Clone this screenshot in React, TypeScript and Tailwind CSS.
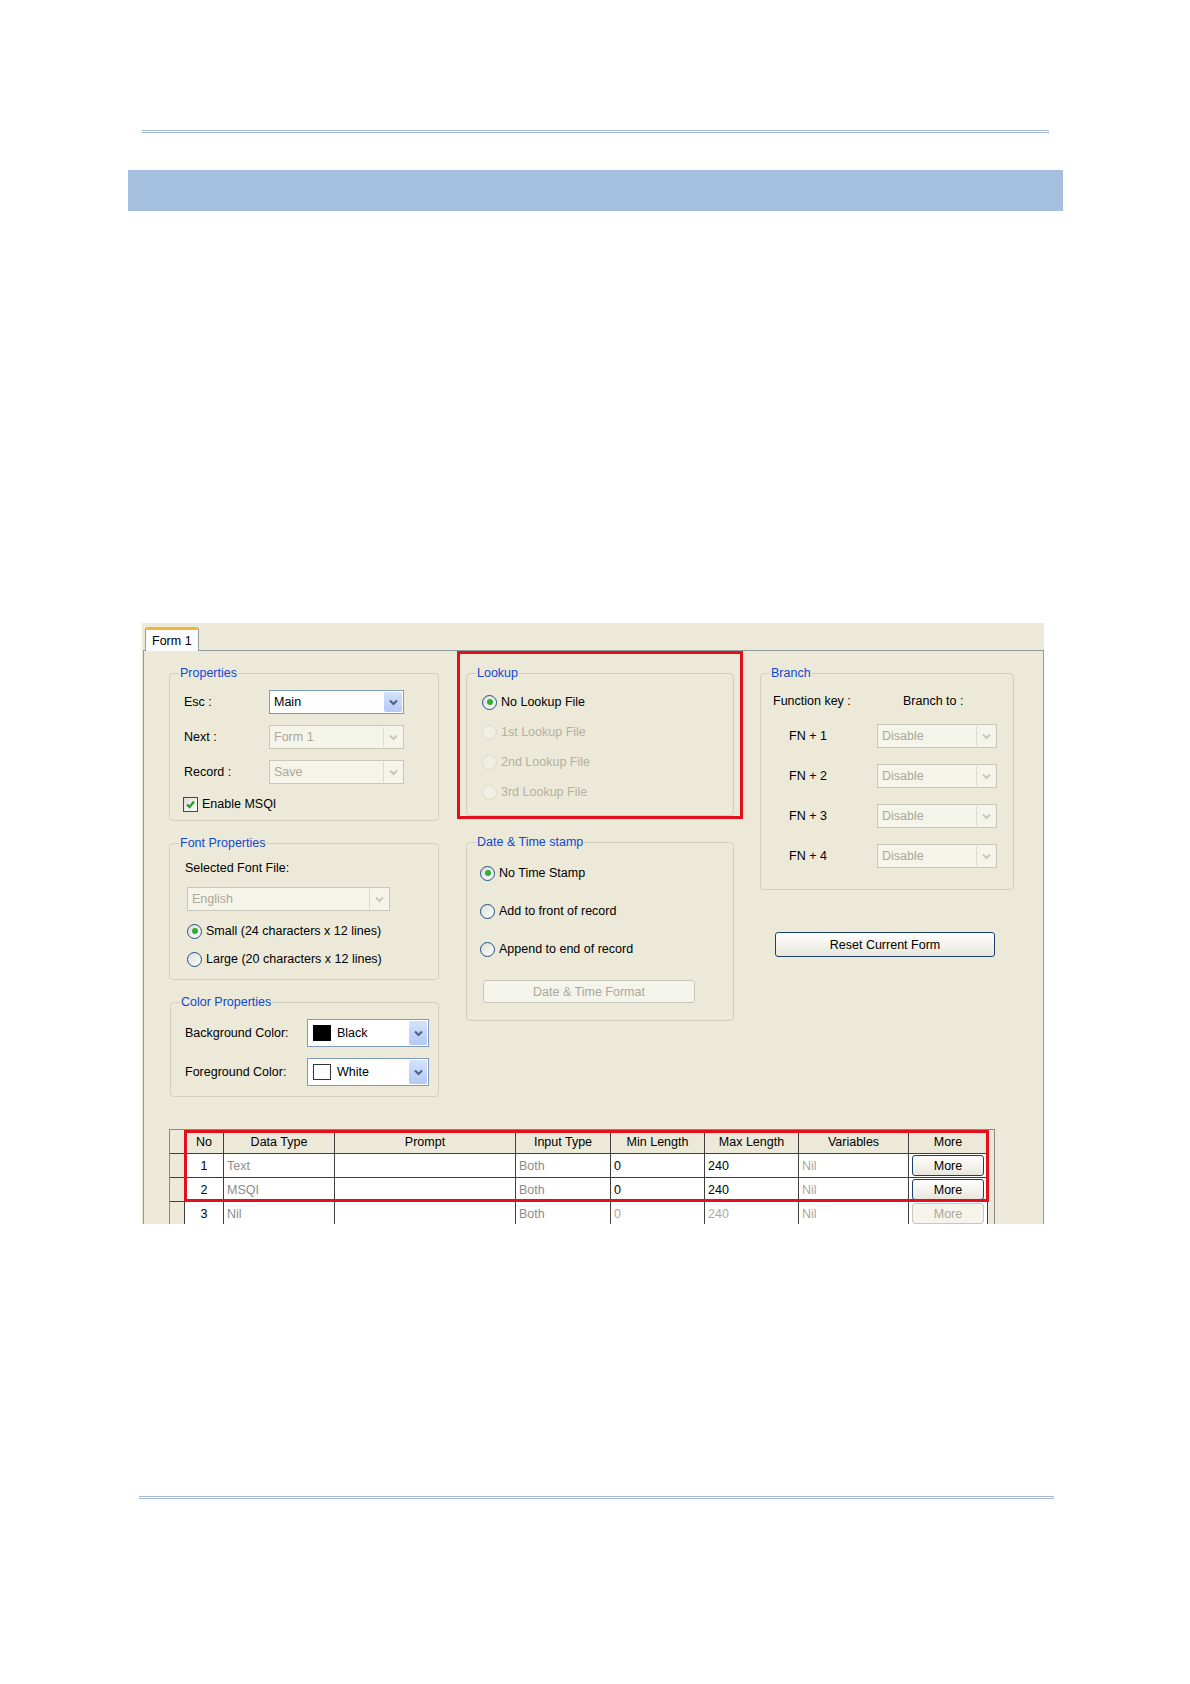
import type { ReactNode } from "react";

const FONT = { fontFamily: '"Liberation Sans", Arial, sans-serif' };

function GroupBox({
  title,
  className,
  children,
}: {
  title: string;
  className?: string;
  children?: ReactNode;
}) {
  return (
    <div className={"relative rounded-[4px] border border-[#d0d0bf] " + (className ?? "")}>
      <span className="absolute -top-[9px] left-[9px] bg-[#ece9d8] px-px text-[12.5px] leading-[16px] text-[#1048d0]">
        {title}
      </span>
      {children}
    </div>
  );
}

function Chevron({ color }: { color: string }) {
  return (
    <svg width="9" height="7" viewBox="0 0 9 7">
      <path d="M1 1.5 L4.5 5 L8 1.5" fill="none" stroke={color} strokeWidth="2" />
    </svg>
  );
}

function Combo({
  value,
  disabled,
  className,
  swatch,
}: {
  value: string;
  disabled?: boolean;
  className: string;
  swatch?: "black" | "white";
}) {
  return (
    <div
      className={
        "flex items-stretch border " +
        (disabled ? "border-[#c9c7ba] bg-[#f5f4ea] text-[#aca899]" : "border-[#7f9db9] bg-white text-black") +
        " " +
        className
      }
    >
      <div className="flex flex-1 items-center gap-[6px] pl-[4px]">
        {swatch === "black" && <span className="ml-px h-[16px] w-[18px] bg-black" />}
        {swatch === "white" && <span className="ml-px h-[16px] w-[18px] border border-[#333] bg-white" />}
        <span>{value}</span>
      </div>
      {disabled ? (
        <div className="m-px flex w-[19px] items-center justify-center border-l border-[#dcdad0]">
          <Chevron color="#c9c7ba" />
        </div>
      ) : (
        <div className="m-px flex w-[18px] items-center justify-center rounded-[2px] bg-linear-to-b from-[#d4e2fd] to-[#b3c9f5]">
          <Chevron color="#4d6185" />
        </div>
      )}
    </div>
  );
}

function Radio({ label, checked, disabled }: { label: string; checked?: boolean; disabled?: boolean }) {
  return (
    <div className={"flex h-[16px] items-center gap-[4px] " + (disabled ? "text-[#b4b1a3]" : "text-black")}>
      <span
        className={
          "flex h-[15px] w-[15px] items-center justify-center rounded-full border " +
          (disabled ? "border-[#dcdacf] bg-[#f1efe4]" : "border-[#1c5180] bg-linear-to-br from-[#dcdcd7] to-white")
        }
      >
        {checked && <span className="h-[6px] w-[6px] rounded-full bg-[#2fae2f]" />}
      </span>
      <span>{label}</span>
    </div>
  );
}

function XpButton({
  label,
  disabled,
  className,
}: {
  label: string;
  disabled?: boolean;
  className: string;
}) {
  return (
    <div
      className={
        "flex items-center justify-center rounded-[3px] border " +
        (disabled
          ? "border-[#c9c7ba] bg-[#f5f4ea] text-[#aca899]"
          : "border-[#1c3f6e] bg-linear-to-b from-white to-[#e8e6dc] text-black") +
        " " +
        className
      }
    >
      {label}
    </div>
  );
}

const COLS = "grid grid-cols-[15px_39px_111px_181px_95px_94px_94px_110px_79px]";
const HEAD = ["No", "Data Type", "Prompt", "Input Type", "Min Length", "Max Length", "Variables", "More"];

const ROWS = [
  { no: "1", type: "Text", active: true },
  { no: "2", type: "MSQI", active: true },
  { no: "3", type: "Nil", active: false },
];

function FieldGrid() {
  const cell = "border-r border-b border-[#3f3f3f] flex items-center";
  return (
    <div className="h-[96px] w-[826px] border-l border-t border-r border-[#8a8a80]">
      <div className={COLS + " h-[24px]"}>
        <div className={cell + " bg-[#ece9d8]"} />
        {HEAD.map((h) => (
          <div key={h} className={cell + " justify-center bg-[#ece9d8]"}>
            {h}
          </div>
        ))}
      </div>
      {ROWS.map((r) => {
        const dim = r.active ? "text-black" : "text-[#aca899]";
        return (
          <div key={r.no} className={COLS + " h-[24px]"}>
            <div className={cell + " bg-[#ece9d8]"} />
            <div className={cell + " justify-center bg-white text-black"}>{r.no}</div>
            <div className={cell + " bg-white pl-[3px] text-[#8c8c8c]"}>{r.type}</div>
            <div className={cell + " bg-white"} />
            <div className={cell + " bg-white pl-[3px] text-[#8c8c8c]"}>Both</div>
            <div className={cell + " bg-white pl-[3px] " + dim}>0</div>
            <div className={cell + " bg-white pl-[3px] " + dim}>240</div>
            <div className={cell + " bg-white pl-[3px] text-[#aca899]"}>Nil</div>
            <div className={cell + " justify-center bg-white"}>
              <XpButton label="More" disabled={!r.active} className="h-[21px] w-[72px]" />
            </div>
          </div>
        );
      })}
    </div>
  );
}

function Screenshot() {
  return (
    <div className="relative h-[601px] w-[902px] overflow-hidden bg-[#ece9d8] text-[12.5px] leading-[16px] text-black" style={FONT}>
      {/* tab strip */}
      <div className="flex h-[27px] items-end pl-[3px]">
        <div className="relative z-10 -mb-px flex h-[24px] w-[54px] items-center rounded-t-[3px] border-x border-t-[3px] border-x-[#919b9c] border-t-[#f3b33d] bg-[#fcfcfe] pl-[6px]">
          Form 1
        </div>
      </div>

      {/* tab page */}
      <div className="ml-px h-[700px] w-[901px] border-x border-t border-[#919b9c] pl-[25px] pt-[22px]">
        <div className="flex items-start">
          {/* left column */}
          <div className="w-[270px]">
            <GroupBox title="Properties" className="h-[148px] pl-[14px] pt-[16px]">
              <div className="flex flex-col gap-[11px]">
                <div className="flex h-[24px] items-center">
                  <span className="w-[85px]">Esc :</span>
                  <Combo value="Main" className="h-[24px] w-[135px]" />
                </div>
                <div className="flex h-[24px] items-center">
                  <span className="w-[85px]">Next :</span>
                  <Combo value="Form 1" disabled className="h-[24px] w-[135px]" />
                </div>
                <div className="flex h-[24px] items-center">
                  <span className="w-[85px]">Record :</span>
                  <Combo value="Save" disabled className="h-[24px] w-[135px]" />
                </div>
              </div>
              <div className="mt-[12px] -ml-px flex h-[16px] items-center gap-[4px]">
                <span className="flex h-[15px] w-[15px] items-center justify-center border border-[#1c5180] bg-linear-to-br from-[#dcdcd7] to-white">
                  <svg width="11" height="11" viewBox="0 0 11 11">
                    <path d="M2 5.5 L4.5 8 L9 2.5" fill="none" stroke="#21a121" strokeWidth="2.2" />
                  </svg>
                </span>
                <span>Enable MSQI</span>
              </div>
            </GroupBox>

            <GroupBox title="Font Properties" className="mt-[22px] h-[137px] pl-[15px] pt-[16px]">
              <div className="h-[16px]">Selected Font File:</div>
              <Combo value="English" disabled className="ml-[2px] mt-[11px] h-[24px] w-[203px]" />
              <div className="ml-[2px] mt-[12px] flex flex-col gap-[12px]">
                <Radio label="Small (24 characters x 12 lines)" checked />
                <Radio label="Large (20 characters x 12 lines)" />
              </div>
            </GroupBox>

            <GroupBox title="Color Properties" className="ml-px mt-[22px] h-[95px] pl-[14px] pt-[16px]">
              <div className="flex flex-col gap-[11px]">
                <div className="flex h-[28px] items-center">
                  <span className="w-[122px]">Background Color:</span>
                  <Combo value="Black" swatch="black" className="h-[28px] w-[122px]" />
                </div>
                <div className="flex h-[28px] items-center">
                  <span className="w-[122px]">Foreground Color:</span>
                  <Combo value="White" swatch="white" className="h-[28px] w-[122px]" />
                </div>
              </div>
            </GroupBox>
          </div>

          {/* middle column */}
          <div className="ml-[27px] w-[268px]">
            <GroupBox title="Lookup" className="h-[143px] pl-[15px] pt-[20px]">
              <div className="flex flex-col gap-[14px]">
                <Radio label="No Lookup File" checked />
                <Radio label="1st Lookup File" disabled />
                <Radio label="2nd Lookup File" disabled />
                <Radio label="3rd Lookup File" disabled />
              </div>
            </GroupBox>

            <GroupBox title="Date & Time stamp" className="mt-[26px] h-[179px] pl-[13px] pt-[22px]">
              <div className="flex flex-col gap-[22px]">
                <Radio label="No Time Stamp" checked />
                <Radio label="Add to front of record" />
                <Radio label="Append to end of record" />
              </div>
              <XpButton label="Date & Time Format" disabled className="ml-[3px] mt-[23px] h-[23px] w-[212px]" />
            </GroupBox>
          </div>

          {/* right column */}
          <div className="ml-[26px] w-[254px]">
            <GroupBox title="Branch" className="h-[217px] pt-[19px]">
              <div className="flex h-[16px] items-center">
                <span className="ml-[12px] w-[130px]">Function key :</span>
                <span>Branch to :</span>
              </div>
              <div className="mt-[15px] flex flex-col gap-[16px]">
                {["FN + 1", "FN + 2", "FN + 3", "FN + 4"].map((k) => (
                  <div key={k} className="flex h-[24px] items-center">
                    <span className="ml-[28px] w-[88px]">{k}</span>
                    <Combo value="Disable" disabled className="h-[24px] w-[120px]" />
                  </div>
                ))}
              </div>
            </GroupBox>
            <XpButton label="Reset Current Form" className="ml-[15px] mt-[42px] h-[25px] w-[220px]" />
          </div>
        </div>

        <div className="mt-[32px]">
          <FieldGrid />
        </div>
      </div>

      {/* red highlight frames drawn over the dialog */}
      <div className="absolute left-[315px] top-[28px] h-[168px] w-[286px] border-[3px] border-[#e3101b]" />
      <div className="absolute left-[42px] top-[507px] h-[72px] w-[805px] border-[3px] border-[#e3101b]" />
    </div>
  );
}

export default function App() {
  return (
    <div className="flex min-h-[1684px] w-[1190px] flex-col bg-white" style={FONT}>
      <div className="ml-[142px] mt-[130px] h-[3px] w-[907px] border-y border-[#a3b8d3]" />
      <div className="ml-[128px] mt-[37px] h-[41px] w-[935px] bg-[#a5bfdf]" />
      <div className="ml-[142px] mt-[412px]">
        <Screenshot />
      </div>
      <div className="ml-[139px] mt-[272px] h-[3px] w-[915px] border-y border-[#a3b8d3]" />
    </div>
  );
}
